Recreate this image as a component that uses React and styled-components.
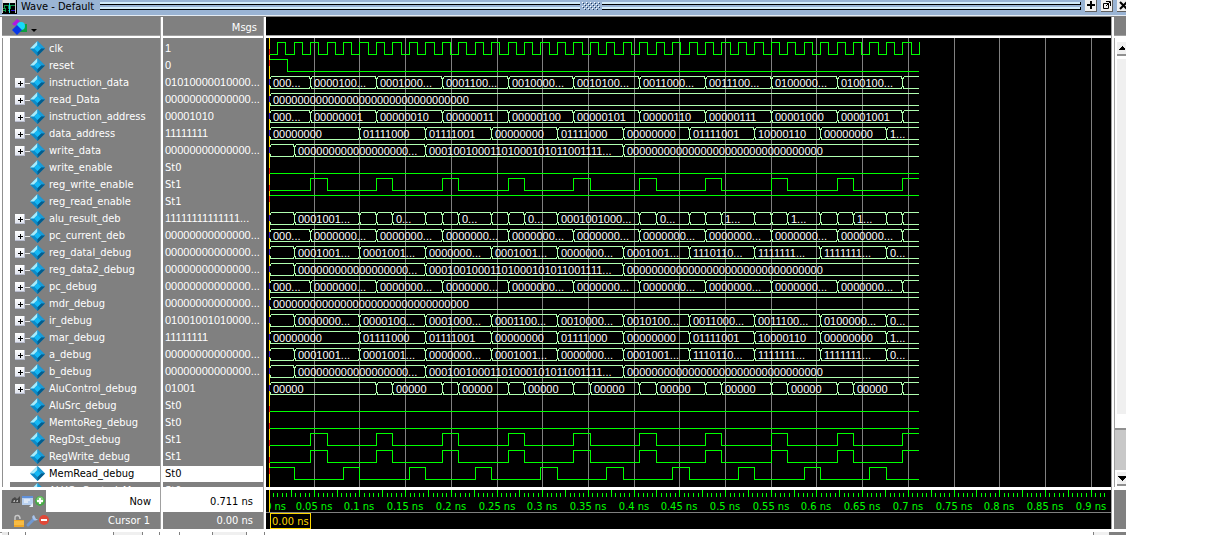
import React from "react";
import styled, { createGlobalStyle } from "styled-components";

const GlobalStyle = createGlobalStyle`
  * { box-sizing: border-box; }
  body {
    margin: 0;
    background: #fff;
    font-family: "DejaVu Sans Condensed", "DejaVu Sans", sans-serif;
    font-size: 11px;
    line-height: 17px;
  }
  ul { margin: 0; padding: 0; list-style: none; }
  button { font: inherit; padding: 0; border: 0; }
`;

const DIGITS = '"Liberation Sans", Arial, sans-serif';
const ROW = 17;
const TOP = 3;
const END = 711;
const LEFT = 3;
const X = (t) => LEFT + Math.round(t * 0.914);

/* ---------- data ---------- */

const every = (from, step = 72) => {
  const out = [];
  for (let t = from; t <= END; t += step) out.push(t);
  return out;
};
const pulses = (from, width = 18) => every(from).flatMap((t) => [t, t + width]).filter((t) => t < END);
const zeros = "0".repeat(32);
const wide = [[27, "0".repeat(18) + "..."], [171, "00010010001101000101011001111..."], [387, zeros]];
const zip = (edges, labels) => edges.map((t, i) => [t, labels[i] || ""]);

const pcEdges = every(45);
const pcLabels = pcEdges.map((t, i) => (i < 9 ? "0000000..." : ""));
const addrLabels = ["00000000", "01111000", "01111001", "00000000", "01111000", "00000000", "01111001", "10000110", "00000000", "1..."];
const address = zip([0, 99, 171, 243, 315, 387, 459, 531, 603, 675], addrLabels);
const regA = zip(every(27), ["0001001...", "0001001...", "0000000...", "0001001...", "0000000...", "0001001...", "1110110...", "1111111...", "1111111...", "0..."]);
const codes = ["0000100...", "0001000...", "0001100...", "0010000...", "0010100...", "0011000...", "0011100...", "0100000...", "0100100..."];

const aluResult = zip(
  [27, 99, 117, 135, 171, 189, 207, 243, 261, 279, 315, 405, 423, 459, 477, 495, 531, 549, 567, 603, 621, 639, 675, 693],
  ["0001001...", "", "", "0...", "", "", "0...", "", "", "0...", "0001001000...", "", "0...", "", "", "1...", "", "", "1...", "", "", "1..."]
);
const aluControl = [[0, "00000"]].concat(pulses(117).map((t, i) => [t, i % 2 && t < 690 ? "00000" : ""]));

const manyZeros = "0".repeat(14) + "...";

const signals = [
  { name: "clk", value: "1", edges: every(9, 9) },
  { name: "reset", value: "0", edges: [20], high: true },
  { name: "instruction_data", value: "01010000010000...", bus: [[0, "000..."], ...zip(pcEdges, codes)] },
  { name: "read_Data", value: manyZeros, bus: [[0, zeros]] },
  { name: "instruction_address", value: "00001010", bus: [[0, "000..."], ...zip(pcEdges, ["00000001", "00000010", "00000011", "00000100", "00000101", "00000110", "00000111", "00001000", "00001001"])] },
  { name: "data_address", value: "11111111", bus: address },
  { name: "write_data", value: manyZeros, bus: [[0, ""], ...wide] },
  { name: "write_enable", value: "St0", edges: [] },
  { name: "reg_write_enable", value: "St1", edges: pulses(45) },
  { name: "reg_read_enable", value: "St1", edges: [], high: true },
  { name: "alu_result_deb", value: "1".repeat(14) + "...", bus: [[0, ""], ...aluResult] },
  { name: "pc_current_deb", value: manyZeros, bus: [[0, "000..."], ...zip(pcEdges, pcLabels)] },
  { name: "reg_datal_debug", value: manyZeros, bus: [[0, ""], ...regA] },
  { name: "reg_data2_debug", value: manyZeros, bus: [[0, ""], ...wide] },
  { name: "pc_debug", value: manyZeros, bus: [[0, "000..."], ...zip(pcEdges, pcLabels)] },
  { name: "mdr_debug", value: manyZeros, bus: [[0, zeros]] },
  { name: "ir_debug", value: "01001001010000...", bus: [[0, ""], ...zip(every(27), ["0000000...", ...codes.slice(0, 8), "0..."])] },
  { name: "mar_debug", value: "11111111", bus: address },
  { name: "a_debug", value: manyZeros, bus: [[0, ""], ...regA] },
  { name: "b_debug", value: manyZeros, bus: [[0, ""], ...wide] },
  { name: "AluControl_debug", value: "01001", bus: aluControl },
  { name: "AluSrc_debug", value: "St0", edges: [] },
  { name: "MemtoReg_debug", value: "St0", edges: [] },
  { name: "RegDst_debug", value: "St1", edges: pulses(45) },
  { name: "RegWrite_debug", value: "St1", edges: pulses(45) },
  { name: "MemRead_debug", value: "St0", edges: [27, ...pulses(81)], high: true, selected: true },
];

/* ---------- window frame ---------- */

const Window = styled.main`
  margin-right: 83px;
  overflow: hidden;
  background: #fff;
`;

const TitleBar = styled.header`
  display: flex;
  height: 17px;
  padding-left: 2px;
  background: #9ab4d4;
  border-bottom: 1px solid #808080;
  box-shadow: inset 0 -1px #e4ecf4;
`;

const Title = styled.h1`
  margin: 0 6px 0 4px;
  font-size: 11px;
  font-weight: 400;
  line-height: 13px;
  white-space: nowrap;
`;

const Grip = styled.div`
  flex: 1;
  display: flex;
  flex-direction: column;
  gap: 2px;
  padding-top: 2px;
  position: relative;
`;

const GripLine = styled.div`
  height: 3px;
  background: #d4ecf8;
  border: solid #000;
  border-width: 0 1px 1px 0;
`;

const GripDots = styled.svg`
  position: absolute;
  left: 50%;
  top: 1px;
  margin-left: -11px;
`;

const TitleButtons = styled.div`
  display: flex;
  gap: 4px;
  margin-left: 4px;
  width: 41px;
`;

const TitleButton = styled.button`
  flex: none;
  width: 12px;
  height: 12px;
  background: #f0f0f0;
  border-right: 1px solid #606060;
  border-bottom: 1px solid #606060;
  svg { display: block; }
`;

const Panes = styled.div`
  display: flex;
  border-left: 2px solid #fff;
  box-shadow: inset 1px 0 #909090;
`;

const Pane = styled.section`
  flex: ${(p) => (p.$width ? "none" : "1")};
  width: ${(p) => (p.$width ? p.$width + "px" : "auto")};
  min-width: 0;
`;

const Splitter = styled.div`
  flex: none;
  width: 3px;
  background: #fff;
  border-left: 1px solid #a0a0a0;
`;

const PaneHead = styled.div`
  display: flex;
  align-items: center;
  justify-content: ${(p) => (p.$end ? "flex-end" : "flex-start")};
  height: 21px;
  padding: 2px 6px 0 9px;
  background: ${(p) => (p.$dark ? "#000" : "#808080")};
  border-bottom: 2px solid #fff;
  box-shadow: inset 0 -1px #a0a0a0;
  color: #fff;
`;

const Rows = styled.ul`
  padding-top: 3px;
  margin-left: ${(p) => p.$indent || 0}px;
  background: #808080;
  color: #fff;
`;

const Row = styled.li`
  display: flex;
  align-items: center;
  height: 17px;
  line-height: 15px;
  padding: 0 0 ${(p) => (p.$selected ? 1 : 2)}px 2px;
  white-space: pre;
  color: ${(p) => (p.$selected ? "#000" : "#fff")};
  background: ${(p) => (p.$selected ? "#fff" : "transparent")};
  border-bottom: ${(p) => (p.$selected ? "1px solid #808080" : "0")};
`;

const PeekRow = styled(Row)`
  align-items: flex-start;
  height: 4px;
  padding-bottom: 0;
  overflow: hidden;
  line-height: 15px;
`;

const Value = styled.span`
  font-family: ${DIGITS};
`;

const StateValue = styled.span``;

const Branch = styled.span`
  display: flex;
  align-items: center;
  width: 18px;
  padding: 1px 0 0 3px;
`;

const Expand = styled.button`
  width: 10px;
  height: 10px;
  flex: none;
  background: linear-gradient(#fff, #dfe3ee);
  svg { display: block; }
`;

const BranchLine = styled.span`
  flex: 1;
  height: 1px;
  background: #e8e8e8;
`;

const SignalName = styled.span`
  margin-left: 4px;
`;

const FootRow = styled.div`
  display: flex;
  justify-content: flex-end;
  align-items: center;
  height: ${(p) => (p.$tall ? "22px" : "17px")};
  padding-right: ${(p) => p.$end}px;
  background: ${(p) => (p.$tall ? "#fff" : "#808080")};
  color: ${(p) => (p.$tall ? "#000" : "#fff")};
`;

const Foot = styled.div`
  border-top: 3px solid #fff;
  box-shadow: inset 0 1px #a0a0a0;
`;

const Tools = styled.span`
  display: flex;
  align-items: center;
  align-self: stretch;
  width: 44px;
  padding-left: 8px;
  margin-right: auto;
  background: #808080;
  svg { flex: none; }
`;

const Plot = styled.svg`
  display: block;
  width: 100%;
  height: ${(p) => p.$height}px;
  background: #000;
  font-size: 11px;
`;

const CursorRow = styled.div`
  display: flex;
  height: 17px;
  padding-left: 4px;
  background: #000;
  border-top: 1px solid #808080;
`;

const CursorBox = styled.span`
  height: 16px;
  padding: 0 1px;
  border: 1px solid #ffd800;
  color: #ffd800;
  line-height: 15px;
  white-space: nowrap;
`;

const Scroller = styled.div`
  display: flex;
  flex-direction: column;
  flex: none;
  width: 12px;
  overflow: hidden;
`;

const ScrollTrack = styled.div`
  flex: 1;
  display: flex;
  flex-direction: column;
  padding: 4px 0 1px 2px;
  background: #fff;
  border-left: 1px solid #a0a0a0;
`;

const ArrowButton = styled.button`
  height: 14px;
  background: #f0f0f0;
  border-bottom: 2px solid #909090;
  svg { display: block; }
`;

const Track = styled.div`
  flex: 1;
  margin-top: 3px;
  background: #f0f0f0;
`;

const Thumb = styled.div`
  height: 42px;
  margin: 14px 0 2px -2px;
  background: #c8c8c8;
  border-top: 2px solid #909090;
`;

const ScrollFill = styled.div`
  height: ${(p) => p.$height}px;
  background: #808080;
`;

const BottomBar = styled.div`
  display: flex;
  height: 6px;
  padding-left: 2px;
  border-top: 3px solid #fff;
  box-shadow: inset 0 1px #909090;
`;

const BottomSlot = styled.div`
  flex: ${(p) => (p.$width ? "none" : "1")};
  width: ${(p) => (p.$width ? p.$width + "px" : "auto")};
  background: ${(p) => p.$tone || "#fff"};
  border-right: 1px solid #808080;
`;

/* ---------- icons ---------- */

const Diamond = () => (
  <svg width="15" height="15" viewBox="0 0 15 15" aria-hidden="true">
    <path d="M7.500 0 15 7.500 7.500 15 0 7.500Z" fill="#0c8ac8" />
    <path d="M7.500 0V4L4 7.500H0Z" fill="#a8ecfc" />
    <path d="M7.500 0 15 7.500H11L7.500 4Z" fill="#1c9cd8" />
    <path d="M15 7.500 7.500 15V11L11 7.500Z" fill="#045c8c" />
    <path d="M7.500 4 11 7.500 7.500 11 4 7.500Z" fill="#14b8f4" />
  </svg>
);

const Plus = () => (
  <svg width="10" height="10" shapeRendering="crispEdges" aria-hidden="true">
    <path d="M3 5.500h5M5.500 3v5" stroke="#000" />
    <path d="M0 9.500h10M9.500 0v10" stroke="#b8bccc" />
  </svg>
);

const WaveIcon = () => (
  <svg width="15" height="14" shapeRendering="crispEdges" aria-hidden="true">
    <rect width="15" height="14" fill="#000" />
    <rect width="14" height="3" fill="#e8e8e8" />
    <path d="M0.500 0v13M13.500 0v13" stroke="#c8c8c8" />
    <path d="M1 8.500h1v-3h4v3h2v-3h5M1 10.500h2M3.500 8v4M6 10.500h2" stroke="#109848" fill="none" />
    <path d="M7.500 3v10" stroke="#20d8e8" />
    <path d="M9 10.500h4" stroke="#3018d0" />
  </svg>
);

const ShapesIcon = () => (
  <svg width="27" height="17" aria-hidden="true">
    <path d="M1 5 6 0l3 2-5 5Z" fill="#b018e0" />
    <path d="M10 5h6v8H9Z" fill="#10a040" />
    <circle cx="10" cy="7" r="4" fill="#18d8f8" />
    <path d="m6 6 5 5-5 5-5-5Z" fill="#0838e8" />
    <path d="M20 10h6l-3 3Z" fill="#000" />
  </svg>
);

const NowTools = () => (
  <svg width="36" height="14" aria-hidden="true">
    <path d="m2 5 3-2 2 2 3-3v7H1Z" fill="#484848" />
    <path d="M4 6h1v2H3ZM7 6h1v2H6Z" fill="#b0b0b0" />
    <rect x="12" y="2" width="11" height="9" fill="#b8d0f0" />
    <rect x="12" y="2" width="11" height="2" fill="#6090d8" />
    <path d="M14 6h6M14 8h4" stroke="#fff" />
    <path d="m19 13 4-4v4Z" fill="#e8eef8" />
    <circle cx="30" cy="7" r="5" fill="#48a848" />
    <circle cx="30" cy="6" r="3.500" fill="#80cc78" />
    <path d="M27 7h6M30 4v6" stroke="#fff" strokeWidth="2" />
  </svg>
);

const CursorTools = () => (
  <svg width="40" height="14" aria-hidden="true">
    <path d="M5 7V4q0-3 3-2.500Q10 2 10 5" fill="none" stroke="#c8c8c8" strokeWidth="1.500" />
    <rect x="4" y="6" width="10" height="7" fill="#f0a828" />
    <path d="M4 8h10M4 10h10" stroke="#ffd060" />
    <path d="m18 11 6-6" stroke="#7098d0" strokeWidth="3" strokeLinecap="round" />
    <path d="M24 1q-3 1-1 4t5 0l-2 0-1-2Z" fill="#a8c4ec" />
    <circle cx="34" cy="6" r="5" fill="#e04838" />
    <path d="M31 6h6" stroke="#fff" strokeWidth="2" />
  </svg>
);

const Arrow = ({ down }) => (
  <svg width="12" height="12" shapeRendering="crispEdges" aria-hidden="true">
    <path d={down ? "M1 4h8v1L5 9 1 5Z" : "M2 8V7l3-3 3 3v1Z"} fill="#000" />
  </svg>
);

/* ---------- wave drawing ---------- */

function Line({ y, edges, high }) {
  let level = high;
  let d = `M${X(0)} ${y + (level ? 1.5 : 13.5)}`;
  edges.forEach((t) => {
    level = !level;
    d += `H${X(t) + 0.5}V${y + (level ? 1.5 : 13.5)}`;
  });
  return <path d={d + `H${X(END)}`} stroke="#00ff00" fill="none" />;
}

function Bus({ y, segments }) {
  const top = y + 1.5;
  const bottom = y + 13.5;
  return segments.map(([t, label], i) => {
    const last = i === segments.length - 1;
    const a = X(t) + 0.5;
    const b = X(last ? END : segments[i + 1][0]) + 0.5;
    const left = `M${a + 1} ${top}V${top + 2}H${a}V${bottom - 2}H${a + 1}V${bottom}`;
    const lines = last
      ? `M${a + 1} ${top}H${b - 0.5}M${a + 1} ${bottom}H${b - 0.5}`
      : `M${a + 1} ${top}H${b - 1}V${top + 2}M${a + 1} ${bottom}H${b - 1}V${bottom - 2}`;
    return (
      <g key={t}>
        <path d={left + lines} stroke="#b0ffb0" fill="none" />
        {label && <text x={X(t) + 4} y={y + 12} fill="#fff" fontFamily={DIGITS}>{label}</text>}
      </g>
    );
  });
}

function Waves() {
  const grid = [];
  for (let t = 50; t < 2000; t += 50) grid.push(t);
  const height = TOP + ROW * signals.length + 4;
  return (
    <Plot $height={height} shapeRendering="crispEdges" role="img" aria-label="Signal waveforms">
      {grid.map((t) => (
        <line key={t} x1={X(t) - 0.5} x2={X(t) - 0.5} y1="0" y2={height} stroke="#808080" />
      ))}
      {signals.map((s, i) =>
        s.bus ? (
          <Bus key={s.name} y={TOP + ROW * i} segments={s.bus} />
        ) : (
          <Line key={s.name} y={TOP + ROW * i} edges={s.edges} high={s.high} />
        )
      )}
      <path d={`M3.500 0V${height}`} stroke="#ffd800" />
      {signals.map((s, i) => {
        const y = TOP + ROW * i + (s.bus ? 4 : s.high ? 2 : 8);
        return <path key={s.name} d={`M3.500 ${y}v6`} stroke={s.bus ? "#4020c0" : "#f02000"} />;
      })}
    </Plot>
  );
}

function Ruler() {
  const ticks = [];
  for (let t = 5; t <= 915; t += 5) ticks.push(t);
  const labels = [];
  for (let t = 50; t <= 900; t += 50) labels.push(t);
  return (
    <Plot $height={22} shapeRendering="crispEdges" role="img" aria-label="Time scale">
      {ticks.map((t) => (
        <path key={t} d={t % 25 ? `M${X(t) - 0.5} 3v4` : `M${X(t) - 0.5} 0v7`} stroke="#00ff00" />
      ))}
      <text x="20" y="20" fill="#00ff00" textAnchor="end">0 ns</text>
      <rect width="3" height="22" />
      <path d="M3.500 0v22" stroke="#ffd800" />
      {labels.map((t) => (
        <text key={t} x={X(t) - 1} y="20" fill="#00ff00" textAnchor="middle">{t / 1000 + " ns"}</text>
      ))}
    </Plot>
  );
}

/* ---------- page ---------- */

export default function App() {
  return (
    <>
      <GlobalStyle />
      <Window>
        <TitleBar>
          <WaveIcon />
          <Title>Wave - Default</Title>
          <Grip>
            <GripLine />
            <GripLine />
            <GripDots width="22" height="10" shapeRendering="crispEdges">
              <rect width="22" height="10" fill="#9ab4d4" />
              <path d="M2 1.500h18M2 5.500h18" stroke="#fff" strokeDasharray="1 3" />
              <path d="M4 3.500h16M4 7.500h16" stroke="#fff" strokeDasharray="1 3" />
              <path d="M3 2.500h18M3 6.500h18" stroke="#203858" strokeDasharray="1 3" />
              <path d="M5 4.500h16M5 8.500h16" stroke="#203858" strokeDasharray="1 3" />
            </GripDots>
          </Grip>
          <TitleButtons>
            <TitleButton aria-label="Dock">
              <svg width="11" height="11"><path d="M2 5h8M6 1v8" stroke="#000" strokeWidth="2" /></svg>
            </TitleButton>
            <TitleButton aria-label="Undock">
              <svg width="11" height="11" fill="none" stroke="#000">
                <path d="M2.500 3.500h5v5h-5ZM5 6l4-4M5 1.500h4.500V6" />
              </svg>
            </TitleButton>
            <TitleButton aria-label="Close">
              <svg width="11" height="11"><path d="m3 2 7 7M10 2 3 9" stroke="#000" strokeWidth="2" /></svg>
            </TitleButton>
          </TitleButtons>
        </TitleBar>

        <Panes>
          <Pane $width={158}>
            <PaneHead><ShapesIcon /></PaneHead>
            <Rows $indent={8}>
              {signals.map((s) => (
                <Row key={s.name} $selected={s.selected}>
                  <Branch>
                    {s.bus && (
                      <>
                        <Expand aria-label={"Expand " + s.name}><Plus /></Expand>
                        <BranchLine />
                      </>
                    )}
                  </Branch>
                  <Diamond />
                  <SignalName>{s.name}</SignalName>
                </Row>
              ))}
              <PeekRow>
                <Branch />
                <Diamond />
                <SignalName>ALUOpControl_M</SignalName>
              </PeekRow>
            </Rows>
            <Foot>
              <FootRow $tall $end={9}><Tools><NowTools /></Tools>Now</FootRow>
              <FootRow $end={10}><Tools><CursorTools /></Tools>Cursor 1</FootRow>
            </Foot>
          </Pane>
          <Splitter />
          <Pane $width={100}>
            <PaneHead $end>Msgs</PaneHead>
            <Rows>
              {signals.map((s) => (
                <Row key={s.name} $selected={s.selected}>
                  {s.value.startsWith("St") ? <StateValue>{s.value}</StateValue> : <Value>{s.value}</Value>}
                </Row>
              ))}
              <PeekRow>St0</PeekRow>
            </Rows>
            <Foot>
              <FootRow $tall $end={10}>0.711 ns</FootRow>
              <FootRow $end={10}>0.00 ns</FootRow>
            </Foot>
          </Pane>
          <Splitter />
          <Pane>
            <PaneHead $dark />
            <Waves />
            <Foot>
              <Ruler />
              <CursorRow><CursorBox>0.00 ns</CursorBox></CursorRow>
            </Foot>
          </Pane>
          <Splitter />
          <Scroller>
            <PaneHead />
            <ScrollTrack>
              <ArrowButton aria-label="Scroll up"><Arrow /></ArrowButton>
              <Track />
              <Thumb />
              <ArrowButton aria-label="Scroll down"><Arrow down /></ArrowButton>
            </ScrollTrack>
            <Foot><ScrollFill $height={39} /></Foot>
          </Scroller>
        </Panes>

        <BottomBar>
          <BottomSlot $width={7} $tone="#e8e8e8" />
          <BottomSlot $width={17} />
          <BottomSlot $width={88} />
          <BottomSlot $width={29} $tone="#f0f0f0" />
          <BottomSlot $width={17} />
          <BottomSlot $width={20} />
          <BottomSlot $width={33} />
          <BottomSlot $width={34} $tone="#f0f0f0" />
          <BottomSlot $width={18} />
          <BottomSlot />
          <BottomSlot $width={16} $tone="#f0f0f0" />
          <BottomSlot $width={16} $tone="#808080" />
        </BottomBar>
      </Window>
    </>
  );
}
